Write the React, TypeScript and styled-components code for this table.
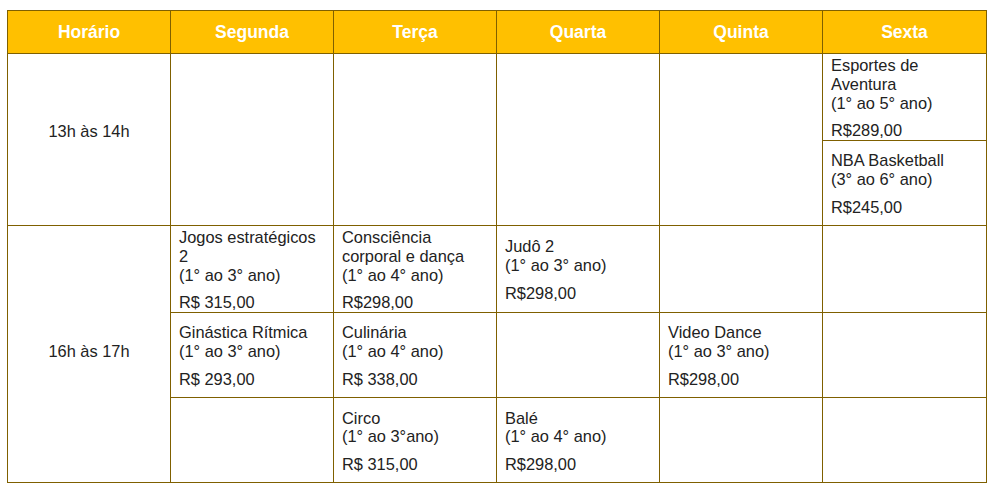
import React from "react";
import styled, { createGlobalStyle } from "styled-components";

const GlobalStyle = createGlobalStyle`
  body {
    margin: 0;
    background: #ffffff;
    font-family: "Liberation Sans", Arial, sans-serif;
  }
`;

const Page = styled.div`
  padding: 10px 0 0 7px;
`;

const Table = styled.table`
  width: 979px;
  border-collapse: collapse;
  table-layout: fixed;
  border: 1px solid #7f6000;
`;

const HeadRow = styled.tr`
  height: 43px;
  background: #ffc000;
`;

const Row = styled.tr<{ $h: number }>`
  height: ${(p) => p.$h}px;
`;

const HeadCell = styled.th`
  border: 1px solid #7f6000;
  color: #ffffff;
  font-size: 17.5px;
  font-weight: 700;
  text-align: center;
  vertical-align: middle;
  padding: 0;
`;

const TimeCell = styled.td<{ $lift: number }>`
  border: 1px solid #7f6000;
  color: #222222;
  font-size: 16.4px;
  line-height: 1.15;
  text-align: center;
  vertical-align: middle;
  padding: 0 0 ${(p) => p.$lift}px;
`;

const Cell = styled.td`
  border: 1px solid #7f6000;
  color: #222222;
  font-size: 16.4px;
  line-height: 1.15;
  text-align: left;
  vertical-align: middle;
  padding: 2px 8px 0;
`;

const Name = styled.div``;

const Price = styled.div`
  margin-top: 8.5px;
`;

type CourseProps = { name: string; grades: string; price: string };

const Course = ({ name, grades, price }: CourseProps) => (
  <>
    <Name>{name}</Name>
    <Name>{grades}</Name>
    <Price>{price}</Price>
  </>
);

const days = ["Horário", "Segunda", "Terça", "Quarta", "Quinta", "Sexta"];

const App = (): JSX.Element => (
  <Page>
    <GlobalStyle />
    <Table>
      <colgroup>
        <col style={{ width: 163 }} />
        <col style={{ width: 163 }} />
        <col style={{ width: 163 }} />
        <col style={{ width: 163 }} />
        <col style={{ width: 163 }} />
        <col style={{ width: 164 }} />
      </colgroup>
      <thead>
        <HeadRow>
          {days.map((d) => (
            <HeadCell key={d}>{d}</HeadCell>
          ))}
        </HeadRow>
      </thead>
      <tbody>
        <Row $h={85.5}>
          <TimeCell rowSpan={2} $lift={17}>
            13h às 14h
          </TimeCell>
          <Cell rowSpan={2} />
          <Cell rowSpan={2} />
          <Cell rowSpan={2} />
          <Cell rowSpan={2} />
          <Cell>
            <Course name="Esportes de Aventura" grades="(1° ao 5° ano)" price="R$289,00" />
          </Cell>
        </Row>
        <Row $h={85}>
          <Cell>
            <Course name="NBA Basketball" grades="(3° ao 6° ano)" price="R$245,00" />
          </Cell>
        </Row>
        <Row $h={85.5}>
          <TimeCell rowSpan={3} $lift={5}>
            16h às 17h
          </TimeCell>
          <Cell>
            <Course name="Jogos estratégicos 2" grades="(1° ao 3° ano)" price="R$ 315,00" />
          </Cell>
          <Cell>
            <Course name="Consciência corporal e dança" grades="(1° ao 4° ano)" price="R$298,00" />
          </Cell>
          <Cell>
            <Course name="Judô 2" grades="(1° ao 3° ano)" price="R$298,00" />
          </Cell>
          <Cell />
          <Cell />
        </Row>
        <Row $h={85}>
          <Cell>
            <Course name="Ginástica Rítmica" grades="(1° ao 3° ano)" price="R$ 293,00" />
          </Cell>
          <Cell>
            <Course name="Culinária" grades="(1° ao 4° ano)" price="R$ 338,00" />
          </Cell>
          <Cell />
          <Cell>
            <Course name="Video Dance" grades="(1° ao 3° ano)" price="R$298,00" />
          </Cell>
          <Cell />
        </Row>
        <Row $h={85.5}>
          <Cell />
          <Cell>
            <Course name="Circo" grades="(1° ao 3°ano)" price="R$ 315,00" />
          </Cell>
          <Cell>
            <Course name="Balé" grades="(1° ao 4° ano)" price="R$298,00" />
          </Cell>
          <Cell />
          <Cell />
        </Row>
      </tbody>
    </Table>
  </Page>
);

export default App;
